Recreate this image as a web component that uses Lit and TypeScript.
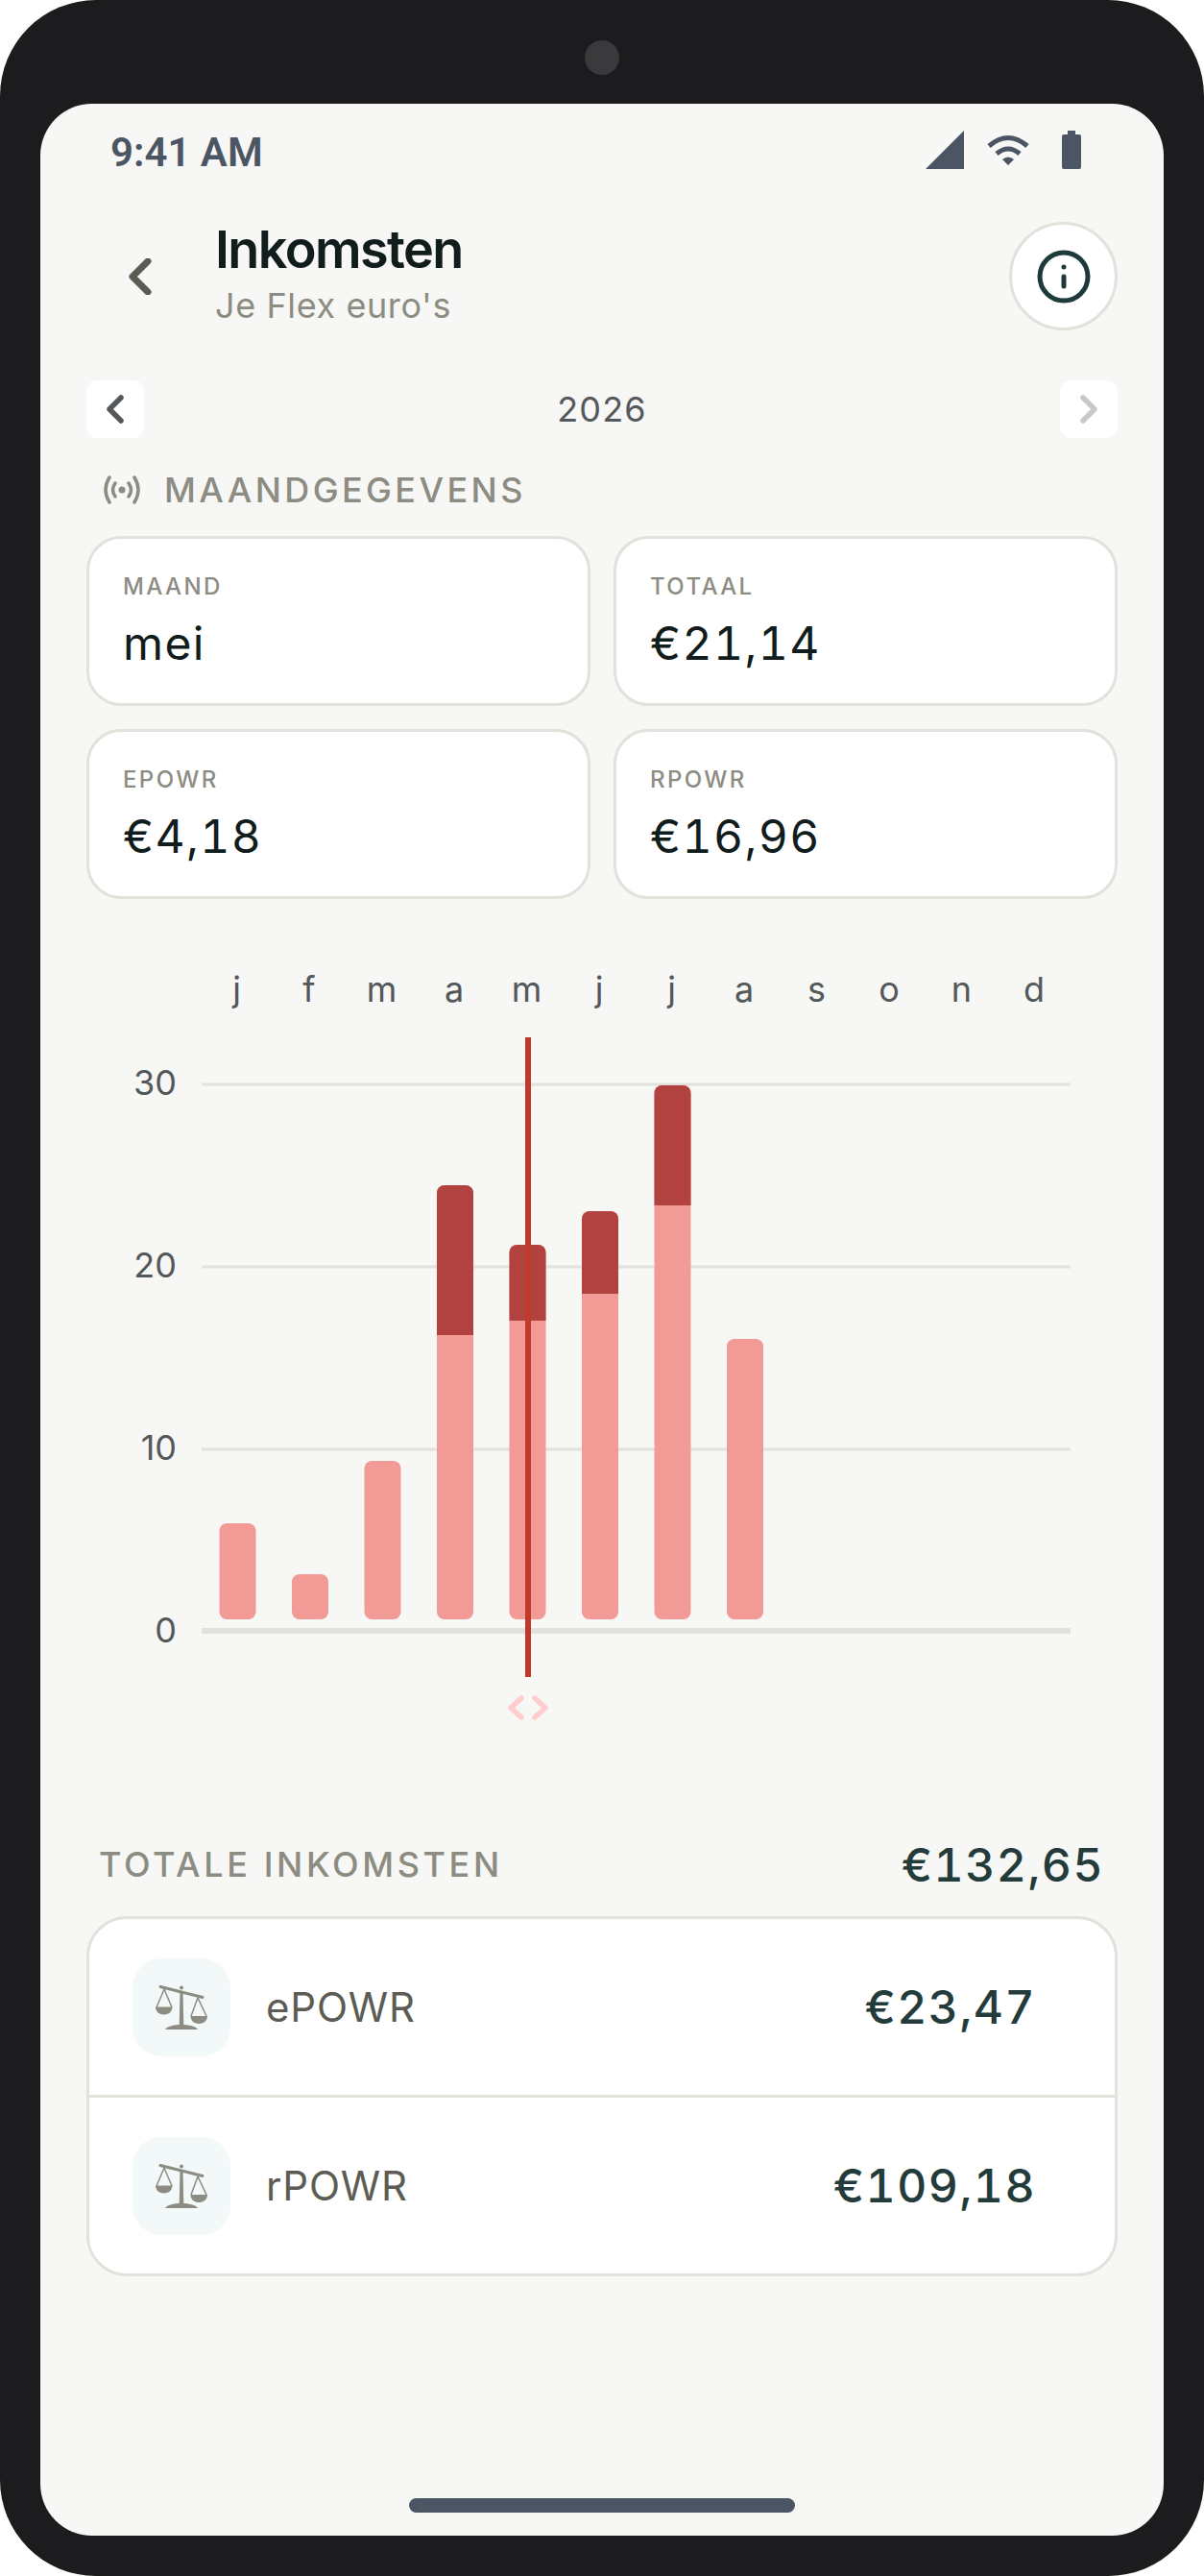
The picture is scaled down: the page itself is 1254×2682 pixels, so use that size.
import { LitElement, html, css, svg } from "lit";
import { customElement } from "lit/decorators.js";

const months = ["j","f","m","a","m","j","j","a","s","o","n","d"];
const bars: [number, number, number][] = [
  [0, 1586, 1586], [1, 1639, 1639], [2, 1521, 1521], [3, 1234, 1390],
  [4, 1296, 1375], [5, 1261, 1347], [6, 1130, 1255], [7, 1394, 1394],
];
const scaleIcon = html`<svg viewBox="0 0 54 46" width="54" height="46">
  <path d="M5 1.500 49 12.500" stroke="#8c8c82" stroke-width="3" fill="none" stroke-linecap="round"/>
  <path d="M9 4 1 23M9 4 17 23M44 13 37 32M44 13 53 32" stroke="#8c8c82" stroke-width="1.500" fill="none"/>
  <path d="M0 22.500h17.500c0 5-4 8-8.750 8s-8.750-3-8.750-8zM36.500 32h17.500c0 5-4 8-8.750 8s-8.750-3-8.750-8z" fill="#8c8c82"/>
  <circle cx="27" cy="2.500" r="2" fill="#8c8c82"/>
  <path d="M25.500 6h3l.8 36h-4.600z" fill="#8c8c82"/>
  <path d="M10 46c2-3.500 9-5 17-5s15 1.500 17 5z" fill="#8c8c82"/>
</svg>`;

@customElement("app-root")
export class AppRoot extends LitElement {
  static styles = css`
    :host { display: block; width: 1254px; height: 2682px; background: #fff; font-family: Inter, "Liberation Sans", sans-serif; }
    * { box-sizing: border-box; }
    .frame { width: 1254px; height: 2682px; background: #1c1c1e; border-radius: 100px; padding: 108px 42px 42px; display: flex; flex-direction: column; position: relative; }
    .camera { position: absolute; left: 609px; top: 42px; width: 36px; height: 36px; border-radius: 50%; background: #3a3a3c; }
    .screen { flex: 1; background: #f7f7f5; border-radius: 54px; display: flex; flex-direction: column; overflow: hidden; }
    .status { height: 96px; padding: 28px 80px 0 73px; display: flex; justify-content: space-between; align-items: flex-start; flex: none; }
    .time { font-family: Roboto, sans-serif; font-weight: 600; font-size: 42px; line-height: 46px; color: #4b5563; }
    .st-icons { display: flex; align-items: flex-start; }
    .header { height: 113px; margin-top: 27px; padding: 0 48px 0 0; display: flex; align-items: center; flex: none; }
    .back { width: 182px; display: flex; justify-content: flex-end; padding-right: 66px; }
    .titles { flex: 1; display: flex; flex-direction: column; }
    .title { font-size: 54px; line-height: 60px; font-weight: 600; color: #111c1c; letter-spacing: -1.6px; margin-top: -6px; }
    .sub { font-size: 36px; line-height: 44px; color: #8c8c82; letter-spacing: 0.6px; margin-top: 6px; }
    .info { width: 113px; height: 113px; border-radius: 50%; background: #fff; border: 3px solid #e3e1db; display: flex; align-items: center; justify-content: center; }
    .year { height: 60px; margin: 52px 48px 0; display: flex; align-items: center; justify-content: space-between; flex: none; }
    .yr-btn { width: 60px; height: 60px; background: #fff; border-radius: 12px; display: flex; align-items: center; justify-content: center; }
    .yr { font-size: 36px; font-weight: 400; color: #55585a; letter-spacing: 1.2px; }
    .section { height: 42px; margin: 33px 48px 0 65px; display: flex; align-items: center; gap: 24px; flex: none; }
    .section-t { font-size: 36px; font-weight: 500; color: #8c8c82; letter-spacing: 3.400px; }
    .grid { margin: 27px 48px 0; display: grid; grid-template-columns: 1fr 1fr; gap: 24px; flex: none; }
    .card { height: 177px; background: #fff; border: 3px solid #e3e1db; border-radius: 36px; padding: 35px 35px 0; }
    .lab { font-size: 24px; line-height: 30px; font-weight: 500; color: #8c8c82; letter-spacing: 2.4px; }
    .val { font-size: 48px; line-height: 60px; margin-top: 14px; color: #111c1c; letter-spacing: 1.4px; font-variant-numeric: tabular-nums; }
    .chart { display: block; width: 1170px; height: 973px; flex: none; }
    .chart text { font-family: Inter, sans-serif; font-size: 36px; fill: #55585a; }
    .tot { margin: 0 48px 0 61px; height: 64px; display: flex; align-items: center; justify-content: space-between; padding-right: 14px; flex: none; }
    .tot-t { font-size: 36px; font-weight: 500; color: #8c8c82; letter-spacing: 3.6px; }
    .tot-v { font-size: 48px; font-weight: 500; color: #233b3b; letter-spacing: 1.5px; font-variant-numeric: tabular-nums; }
    .list { margin: 22px 48px 0; background: #fff; border: 3px solid #e3e1db; border-radius: 42px; flex: none; }
    .row { height: 183px; display: flex; align-items: center; padding: 0 82px 0 45px; }
    .row + .row { height: 186px; border-top: 3px solid #e3e1db; }
    .ic { width: 102px; height: 102px; border-radius: 30px; background: #f3f9f9; display: flex; align-items: center; justify-content: center; }
    .name { margin-left: 37px; flex: 1; font-size: 42px; color: #5c5c54; letter-spacing: 0.8px; }
    .amt { font-size: 48px; font-weight: 500; color: #233b3b; letter-spacing: 1.5px; font-variant-numeric: tabular-nums; }
    .home { width: 402px; height: 15px; background: #4b5563; border-radius: 8px; margin: auto auto 24px; flex: none; }
  `;

  render() {
    return html`<div class="frame">
      <div class="camera"></div>
      <div class="screen">
        <div class="status">
          <span class="time">9:41 AM</span>
          <div class="st-icons">
            <svg width="168" height="44" viewBox="0 0 168 44">
              <path d="M0 40 40 0V40Z" fill="#4b5563"/>
              <path d="M66 16Q86-1 106 16M74 24Q86 14 98 24" stroke="#4b5563" stroke-width="5" fill="none"/>
              <path d="M86 36 80 30Q86 25 92 30Z" fill="#4b5563"/>
              <path d="M148 0h8v4h4a2 2 0 0 1 2 2v32a2 2 0 0 1-2 2h-16a2 2 0 0 1-2-2V6a2 2 0 0 1 2-2h4z" fill="#4b5563"/>
            </svg>
          </div>
        </div>
        <div class="header">
          <div class="back"><svg width="24" height="38" viewBox="0 0 24 38"><path d="M20 3 4 19 20 35" fill="none" stroke="#5c5c54" stroke-width="7" stroke-linecap="round" stroke-linejoin="round"/></svg></div>
          <div class="titles"><div class="title">Inkomsten</div><div class="sub">Je Flex euro's</div></div>
          <div class="info"><svg width="60" height="60" viewBox="0 0 24 24" fill="none" stroke="#1f3a3a" stroke-width="2" stroke-linecap="round"><circle cx="12" cy="12" r="10"/><path d="M12 16v-4M12 8h.01"/></svg></div>
        </div>
        <div class="year">
          <div class="yr-btn"><svg width="20" height="30" viewBox="0 0 20 30"><path d="M16 3 4 15 16 27" fill="none" stroke="#55585a" stroke-width="5.500" stroke-linecap="round" stroke-linejoin="round"/></svg></div>
          <span class="yr">2026</span>
          <div class="yr-btn"><svg width="20" height="30" viewBox="0 0 20 30"><path d="M4 3 16 15 4 27" fill="none" stroke="#c8c8c4" stroke-width="5.500" stroke-linecap="round" stroke-linejoin="round"/></svg></div>
        </div>
        <div class="section">
          <svg width="40" height="30" viewBox="0 0 40 30" fill="none" stroke="#8c8c82" stroke-width="3.500" stroke-linecap="round"><path d="M7 2Q-1 15 7 28M33 2Q41 15 33 28M13 8Q8 15 13 22M27 8Q32 15 27 22"/><circle cx="20" cy="15" r="3.500" fill="#8c8c82" stroke="none"/></svg>
          <span class="section-t">MAANDGEGEVENS</span>
        </div>
        <div class="grid">
          <div class="card"><div class="lab">MAAND</div><div class="val">mei</div></div>
          <div class="card"><div class="lab">TOTAAL</div><div class="val">€21,14</div></div>
          <div class="card"><div class="lab">EPOWR</div><div class="val">€4,18</div></div>
          <div class="card"><div class="lab">RPOWR</div><div class="val">€16,96</div></div>
        </div>
        ${this.chart()}
        <div class="tot"><span class="tot-t">TOTALE INKOMSTEN</span><span class="tot-v">€132,65</span></div>
        <div class="list">
          <div class="row"><div class="ic">${scaleIcon}</div><span class="name">ePOWR</span><span class="amt">€23,47</span></div>
          <div class="row"><div class="ic">${scaleIcon}</div><span class="name">rPOWR</span><span class="amt">€109,18</span></div>
        </div>
        <div class="home"></div>
      </div>
    </div>`;
  }

  chart() {
    const ox = 42, oy = 936;
    return html`<svg class="chart" viewBox="${ox} ${oy} 1170 973">
      ${months.map((m, i) => svg`<text x=${246.5 + i * 75.5} y="1043" text-anchor="middle">${m}</text>`)}
      ${[[30, 1129], [20, 1319], [10, 1509]].map(([l, y]) => svg`
        <line x1="210" x2="1115" y1=${y} y2=${y} stroke="#e3e1db" stroke-width="3"/>
        <text x="184" y=${y + 11} text-anchor="end">${l}</text>`)}
      <line x1="210" x2="1115" y1="1698" y2="1698" stroke="#e3e1db" stroke-width="6"/>
      <text x="184" y="1710" text-anchor="end">0</text>
      ${bars.map(([i, top, split]) => {
        const x = 228.5 + i * 75.5, w = 38, r = 8, b = 1686;
        const shape = (c: string, t: number) => svg`<path fill=${c} d="M${x} ${t + r}a${r} ${r} 0 0 1 ${r}-${r}h${w - 2 * r}a${r} ${r} 0 0 1 ${r} ${r}V${b - r}a${r} ${r} 0 0 1-${r} ${r}h-${w - 2 * r}a${r} ${r} 0 0 1-${r}-${r}z"/>`;
        return svg`${shape("#f29a96", top)}${split !== top ? svg`<path fill="#b2423f" d="M${x} ${top + r}a${r} ${r} 0 0 1 ${r}-${r}h${w - 2 * r}a${r} ${r} 0 0 1 ${r} ${r}V${split}H${x}z"/>` : ""}`;
      })}
      <rect x="547" y="1080" width="6" height="666" fill="#c0392b"/>
      <path d="M543 1768 532 1778 543 1788M557 1768 568 1778 557 1788" fill="none" stroke="#ffcdcd" stroke-width="5.500" stroke-linecap="round" stroke-linejoin="round"/>
    </svg>`;
  }
}
